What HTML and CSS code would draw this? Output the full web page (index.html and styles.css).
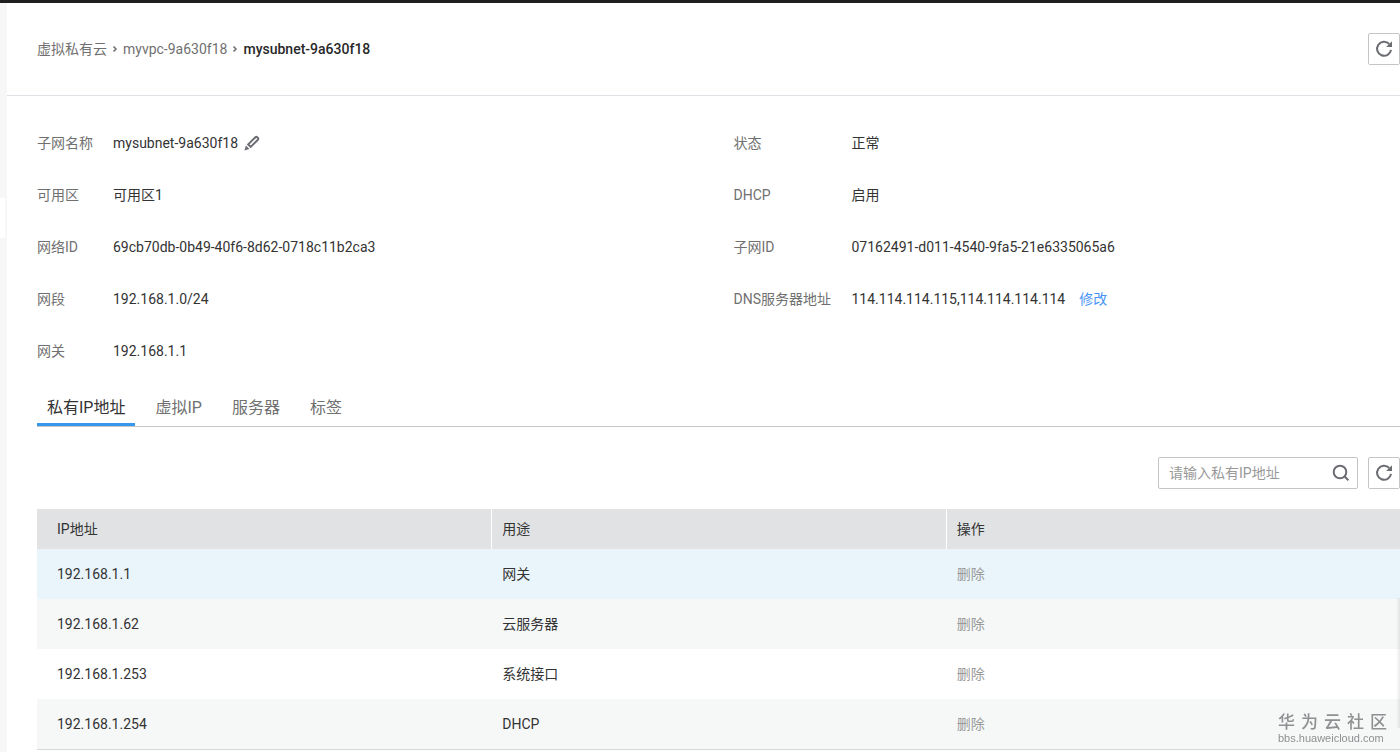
FILE: index.html
```
<!DOCTYPE html>
<html lang="zh-CN">
<head>
    <meta charset="UTF-8">
    <title>mysubnet-9a630f18</title>
    <link rel="stylesheet" href="styles.css">
</head>
<body>
    <div class="page">
        <aside class="side-strip">
            <div class="side-handle"></div>
        </aside>

        <main class="main">
            <header class="header">
                <nav class="breadcrumb">
                    <a href="#">虚拟私有云</a>
                    <svg class="arrow" viewBox="0 0 6 8"><path d="M1.5 1.5L4 4L1.5 6.5"/></svg>
                    <a href="#">myvpc-9a630f18</a>
                    <svg class="arrow" viewBox="0 0 6 8"><path d="M1.5 1.5L4 4L1.5 6.5"/></svg>
                    <span class="current">mysubnet-9a630f18</span>
                </nav>
                <button class="icon-button" aria-label="刷新">
                    <svg class="refresh-icon" viewBox="0 0 18 18"><path d="M14.2 4A7 7 0 1 0 16 9.8"/><path class="fill" d="M17 1.2V7H11.2Z"/></svg>
                </button>
            </header>

            <section class="details">
                <dl class="info">
                    <dt>子网名称</dt>
                    <dd>
                        mysubnet-9a630f18
                        <button class="edit-button" aria-label="编辑">
                            <svg class="edit-icon" viewBox="0 0 16 16"><path d="M4.2 9.4L11.4 2.2Q12.3 1.3 13.2 2.2L13.9 2.9Q14.8 3.8 13.9 4.7L6.7 11.9Z"/><path class="fill" d="M2 10.6L5.4 14L0.4 15.6Z"/></svg>
                        </button>
                    </dd>
                    <dt>可用区</dt>
                    <dd>可用区1</dd>
                    <dt>网络ID</dt>
                    <dd>69cb70db-0b49-40f6-8d62-0718c11b2ca3</dd>
                    <dt>网段</dt>
                    <dd>192.168.1.0/24</dd>
                    <dt>网关</dt>
                    <dd>192.168.1.1</dd>
                </dl>
                <dl class="info info-wide">
                    <dt>状态</dt>
                    <dd>正常</dd>
                    <dt>DHCP</dt>
                    <dd>启用</dd>
                    <dt>子网ID</dt>
                    <dd>07162491-d011-4540-9fa5-21e6335065a6</dd>
                    <dt>DNS服务器地址</dt>
                    <dd>114.114.114.115,114.114.114.114 <a class="modify" href="#">修改</a></dd>
                </dl>
            </section>

            <nav class="tabs">
                <a class="tab active" href="#">私有IP地址</a>
                <a class="tab" href="#">虚拟IP</a>
                <a class="tab" href="#">服务器</a>
                <a class="tab" href="#">标签</a>
            </nav>

            <div class="toolbar">
                <div class="search">
                    <input type="text" class="search-input" placeholder="请输入私有IP地址" aria-label="请输入私有IP地址">
                    <button class="search-button" aria-label="搜索">
                        <svg class="search-icon" viewBox="0 0 18 18"><circle cx="8" cy="8" r="6.3"/><path d="M12.6 12.6L16.4 16.2"/></svg>
                    </button>
                </div>
                <button class="icon-button" aria-label="刷新">
                    <svg class="refresh-icon" viewBox="0 0 18 18"><path d="M14.2 4A7 7 0 1 0 16 9.8"/><path class="fill" d="M17 1.2V7H11.2Z"/></svg>
                </button>
            </div>

            <table class="ip-table">
                <thead>
                    <tr>
                        <th>IP地址</th>
                        <th>用途</th>
                        <th>操作</th>
                    </tr>
                </thead>
                <tbody>
                    <tr class="hovered">
                        <td>192.168.1.1</td>
                        <td>网关</td>
                        <td><button class="delete" disabled>删除</button></td>
                    </tr>
                    <tr>
                        <td>192.168.1.62</td>
                        <td>云服务器</td>
                        <td><button class="delete" disabled>删除</button></td>
                    </tr>
                    <tr>
                        <td>192.168.1.253</td>
                        <td>系统接口</td>
                        <td><button class="delete" disabled>删除</button></td>
                    </tr>
                    <tr>
                        <td>192.168.1.254</td>
                        <td>DHCP</td>
                        <td><button class="delete" disabled>删除</button></td>
                    </tr>
                </tbody>
            </table>
        </main>
    </div>

    <div class="float-shadow"></div>
    <div class="watermark">
        <div class="watermark-name"><span>华</span><span>为</span><span>云</span><span>社</span><span>区</span></div>
        <div class="watermark-url">bbs.huaweicloud.com</div>
    </div>
</body>
</html>
```

FILE: styles.css
```
* {
    box-sizing: border-box;
}

body {
    margin: 0;
    font-family: Roboto, "Noto Sans CJK SC", sans-serif;
    font-size: 14px;
    line-height: 20px;
    color: #333;
    background: #fff;
}

a {
    color: inherit;
    text-decoration: none;
}

button {
    padding: 0;
    border: none;
    background: none;
    font: inherit;
    cursor: pointer;
}

svg {
    display: block;
    fill: none;
    stroke: #6b6d72;
    stroke-width: 2;
}

svg .fill {
    fill: #6b6d72;
    stroke: none;
}

.page {
    display: flex;
    min-height: 100vh;
    border-top: 3px solid #1f1f1f;
}

.side-strip {
    width: 7px;
    flex-shrink: 0;
    padding-top: 195px;
    background: #f7f7f7;
}

.side-handle {
    width: 5px;
    height: 40px;
    background: #fff;
}

.main {
    flex: 1;
    min-width: 0;
    padding-left: 30px;
}

.header {
    display: flex;
    align-items: center;
    justify-content: space-between;
    height: 93px;
    margin-left: -30px;
    padding-left: 30px;
    border-bottom: 1px solid #dfe1e6;
}

.breadcrumb {
    display: flex;
    align-items: center;
    color: #707070;
}

.breadcrumb .arrow {
    width: 6px;
    height: 8px;
    margin: 0 5px;
    stroke-width: 1.5;
}

.breadcrumb .current {
    font-weight: 500;
    color: #282828;
}

.icon-button {
    display: flex;
    align-items: center;
    justify-content: center;
    width: 32px;
    height: 32px;
    border: 1px solid #c3c5c9;
    border-radius: 2px;
}

.refresh-icon,
.search-icon {
    width: 18px;
    height: 18px;
}

.details {
    display: grid;
    grid-template-columns: 1fr 1fr;
    gap: 30px;
    align-items: start;
    padding-top: 37px;
}

.info {
    display: grid;
    grid-template-columns: 76px 1fr;
    row-gap: 32px;
    margin: 0;
}

.info-wide {
    grid-template-columns: 118px 1fr;
}

.info dt {
    color: #707070;
}

.info dd {
    display: flex;
    align-items: center;
    margin: 0;
}

.edit-button {
    margin-left: 6px;
}

.edit-icon {
    width: 16px;
    height: 16px;
}

.modify {
    margin-left: 14px;
    color: #4a94f7;
}

.tabs {
    display: flex;
    gap: 10px;
    margin-top: 27px;
    border-bottom: 1px solid #c3c5c9;
    font-size: 16px;
    color: #707070;
}

.tab {
    padding: 10px 10px 5px;
    border-bottom: 3px solid transparent;
}

.tab.active {
    border-bottom-color: #3598ee;
    color: #333;
}

.toolbar {
    display: flex;
    justify-content: flex-end;
    gap: 10px;
    padding: 30px 0 20px;
}

.search {
    display: flex;
    align-items: center;
    width: 200px;
    height: 32px;
    border: 1px solid #c3c5c9;
    border-radius: 2px;
}

.search-input {
    flex: 1;
    min-width: 0;
    padding: 0 10px;
    border: none;
    outline: none;
    background: none;
    font: inherit;
    color: inherit;
}

.search-input::placeholder {
    color: #999;
}

.search-button {
    margin-right: 7px;
}

.ip-table {
    width: 100%;
    table-layout: fixed;
    border-collapse: separate;
    border-spacing: 0;
    border-bottom: 1px solid #d5d8db;
}

.ip-table th,
.ip-table td {
    padding: 0 10px;
    text-align: left;
}

.ip-table th {
    height: 40px;
    background: #e0e2e4;
    font-weight: 400;
}

.ip-table th + th {
    border-left: 1px solid #fff;
}

.ip-table td + td {
    padding-left: 11px;
}

.ip-table th:first-child,
.ip-table td:first-child {
    padding-left: 20px;
}

.ip-table td {
    height: 50px;
}

.ip-table tbody tr:nth-child(even) {
    background: #f6f8f8;
}

.ip-table .hovered {
    background: #e9f5fb;
}

.delete {
    color: #999;
    cursor: default;
}

/* edge of the floating panel on the right */
.float-shadow {
    position: fixed;
    right: 0;
    bottom: 24px;
    width: 4px;
    height: 130px;
    background: linear-gradient(to right, transparent, rgba(0, 0, 0, 0.08));
}

.watermark {
    position: fixed;
    right: 13px;
    bottom: 8px;
    width: 109px;
    color: #8e9091;
}

.watermark-name {
    display: flex;
    justify-content: space-between;
    font-size: 17px;
    line-height: 20px;
    font-weight: 500;
}

.watermark-url {
    font-family: "Liberation Sans", sans-serif;
    font-size: 11px;
    line-height: 12px;
}
```
